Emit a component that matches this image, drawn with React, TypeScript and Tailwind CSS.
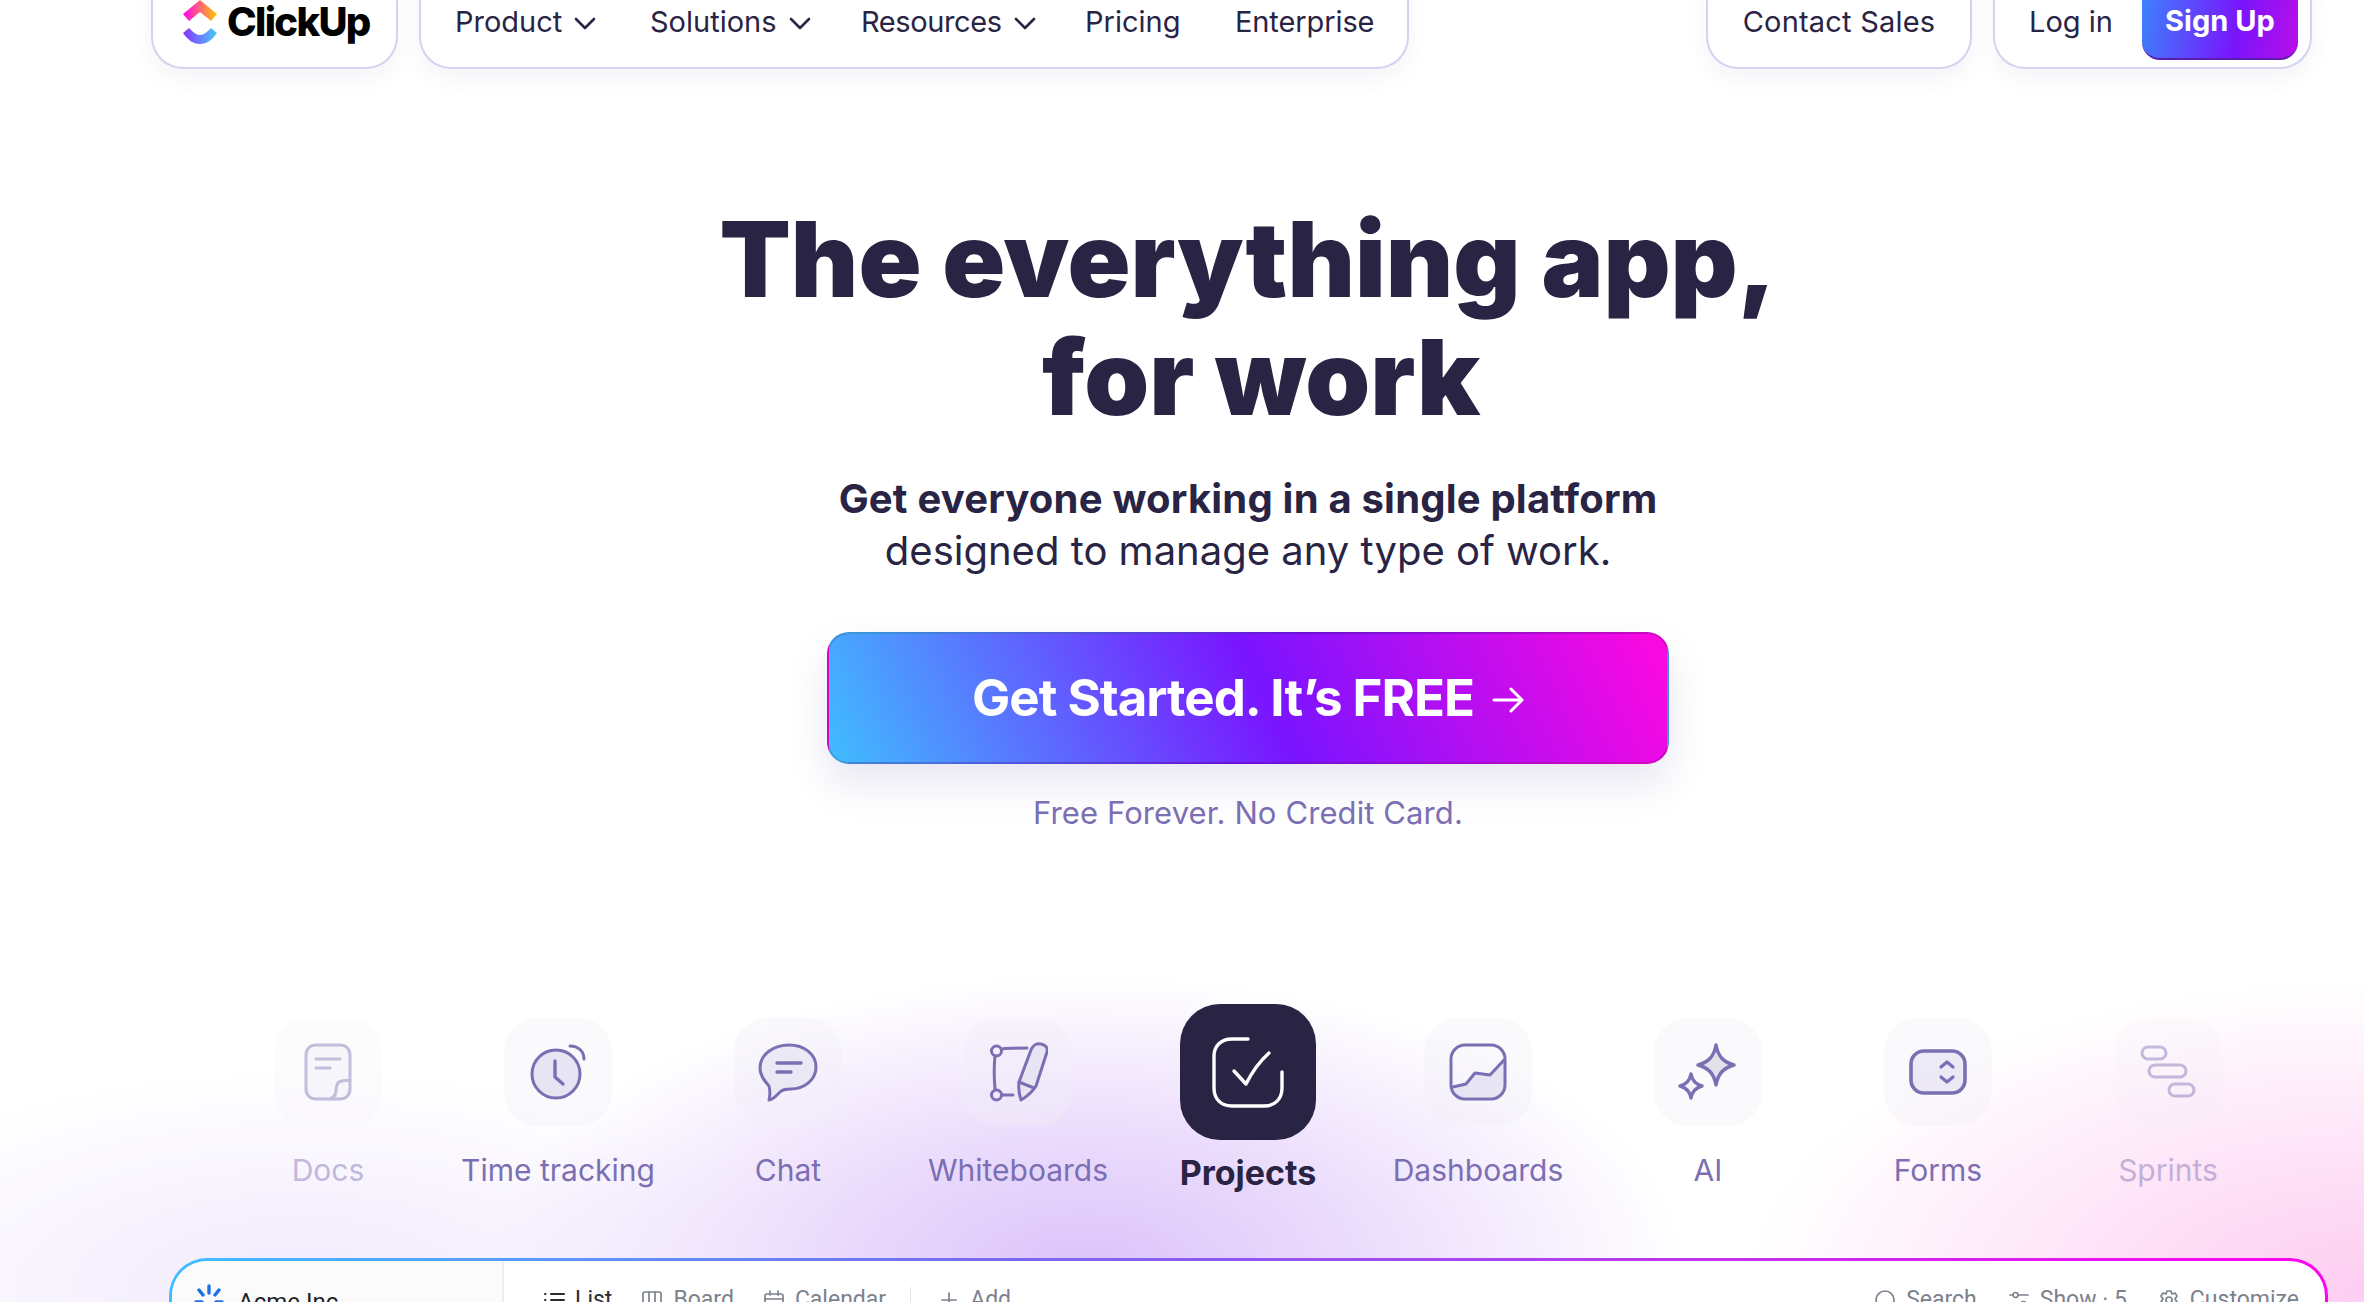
import React from "react";
import { ChevronDown } from "lucide-react";

const S = "#7b6fb3";
const F = "#e7e4f3";

function Ico({ children }: { children: React.ReactNode }) {
  return (
    <svg width="60" height="60" viewBox="0 0 60 60" fill="none" stroke={S} strokeWidth="3" strokeLinecap="round" strokeLinejoin="round">
      {children}
    </svg>
  );
}

const icons: Record<string, React.ReactNode> = {
  Docs: (
    <Ico>
      <path d="M18 3h24c6 0 10 4 10 10v34c0 6-4 10-10 10H18c-6 0-10-4-10-10V13C8 7 12 3 18 3z" fill={F} fillOpacity="0.6" />
      <path d="M52 38c-3 1-8 0-11 2-4 3-2 9-4 13-1 2-3 3-5 4" />
      <path d="M18 17h24M18 26h14" />
    </Ico>
  ),
  "Time tracking": (
    <Ico>
      <circle cx="28" cy="32" r="24" fill={F} />
      <path d="M27 19v16l8 7" strokeWidth="3.4" />
      <path d="M42 4c8 0 14 5 14 13" />
    </Ico>
  ),
  Chat: (
    <Ico>
      <path d="M31 3c15 0 27 9 27 22S46 47 33 47c-5 0-8 0-11 3-3 3-7 8-11 8 1-4 1-10 0-14-2-3-9-8-9-18C2 12 16 3 31 3z" fill={F} fillOpacity="0.7" />
      <path d="M19 21h24M19 30h14" strokeWidth="3.4" />
    </Ico>
  ),
  Whiteboards: (
    <Ico>
      <circle cx="8.5" cy="9" r="5" />
      <circle cx="8.5" cy="53" r="5" />
      <path d="M14 7c8-1 17-1 25-1M7 14c-1 10-1 22 0 33M15 53h10" />
      <path d="M43 8c2-5 6-7 10-6 5 1 7 4 6 8L48 44Q43 52 33 58Q30 50 31 40z" fill={F} />
      <path d="M31 40l15 6" />
    </Ico>
  ),
  Dashboards: (
    <Ico>
      <path d="M6 45l12-3 9-11 15 2 14-15v24c0 9-4 13-13 13H17C8 55 5 51 5 45z" fill={F} stroke="none" />
      <rect x="3" y="3" width="54" height="54" rx="14" />
      <path d="M5 45l13-3 9-11 15 2 14-15" />
    </Ico>
  ),
  AI: (
    <Ico>
      <path d="M38 3c2 11 7 17 18 20-11 3-16 9-18 20-2-11-7-17-18-20 11-3 16-9 18-20z" fill="#e2e1ea" strokeWidth="3.4" />
      <path d="M13 32c1 6 4 10 11 12-7 2-10 6-11 12-1-6-4-10-11-12 7-2 10-6 11-12z" fill="#f6f5fa" strokeWidth="3.4" />
    </Ico>
  ),
  Forms: (
    <Ico>
      <rect x="3" y="9" width="54" height="42" rx="13" fill={F} fillOpacity="0.75" strokeWidth="3.6" />
      <path d="M33 25l6-5 6 5M33 35l6 5 6-5" strokeWidth="3.2" />
    </Ico>
  ),
  Sprints: (
    <Ico>
      <rect x="4" y="5" width="24" height="12" rx="6" />
      <rect x="11" y="23" width="37" height="12" rx="6" />
      <rect x="31" y="42" width="25" height="12" rx="6" />
    </Ico>
  ),
};

const items = [
  { n: "Docs", o: "opacity-45" },
  { n: "Time tracking", o: "opacity-100" },
  { n: "Chat", o: "opacity-100" },
  { n: "Whiteboards", o: "opacity-100" },
  { n: "Projects", o: "opacity-100" },
  { n: "Dashboards", o: "opacity-100" },
  { n: "AI", o: "opacity-100" },
  { n: "Forms", o: "opacity-100" },
  { n: "Sprints", o: "opacity-45" },
];

function Tile({ n, o }: { n: string; o: string }) {
  if (n === "Projects") {
    return (
      <div className="flex w-[230px] flex-col items-center">
        <div className="flex h-[136px] w-[136px] items-center justify-center rounded-[40px] bg-[#292444]">
          <svg width="72" height="72" viewBox="0 0 72 72" fill="none" stroke="#fff" strokeWidth="3.4" strokeLinecap="round" strokeLinejoin="round">
            <path d="M36 3H20C9 3 2 10 2 20v32c0 11 7 18 18 18h32c11 0 18-7 18-18V36" />
            <path d="M22 35l12 13c5-10 13-22 23-31" />
          </svg>
        </div>
        <div className="mt-[13px] text-[34px] font-bold leading-[40px] text-[#292444]">Projects</div>
      </div>
    );
  }
  return (
    <div className={`flex w-[230px] flex-col items-center ${o}`}>
      <div className="flex h-[136px] w-[136px] items-center justify-center">
        <div className="flex h-[108px] w-[108px] items-center justify-center rounded-[34px] bg-[#f1eff7]/35">{icons[n]}</div>
      </div>
      <div className="mt-[10px] text-[30px] font-normal leading-[40px] text-[#7b6fb3]">{n}</div>
    </div>
  );
}

function NavBox({ className, children }: { className: string; children: React.ReactNode }) {
  return (
    <div className={`flex h-[93px] rounded-b-[32px] border-2 border-t-0 border-[#d4d2ee] bg-white shadow-[0_10px_20px_rgba(90,80,160,0.06)] ${className}`}>
      {children}
    </div>
  );
}

function NavItem({ label, chevron, className }: { label: string; chevron?: boolean; className: string }) {
  return (
    <div className={`flex items-center text-[29px] leading-[36px] text-[#292444] ${className}`}>
      {label}
      {chevron && (
        <svg width="22" height="14" viewBox="0 0 22 14" fill="none" stroke="#292444" strokeWidth="2.6" strokeLinecap="round" strokeLinejoin="round" className="ml-[12px] mt-[3px]">
          <path d="M2 3l9 9 9-9" />
        </svg>
      )}
    </div>
  );
}

function Tab({ icon, label, className, dark }: { icon: React.ReactNode; label: string; className: string; dark?: boolean }) {
  return (
    <div className={`flex items-center gap-[9px] text-[23px] leading-[26px] ${dark ? "text-[#2a2e34]" : "text-[#7c828d]"} ${className}`}>
      {icon}
      <span>{label}</span>
    </div>
  );
}

function Small({ children }: { children: React.ReactNode }) {
  return (
    <svg width="24" height="24" viewBox="0 0 24 24" fill="none" stroke="#7c828d" strokeWidth="1.7" strokeLinecap="round" strokeLinejoin="round">
      {children}
    </svg>
  );
}

export default function App() {
  return (
    <div className="relative h-[1302px] w-[2364px] overflow-hidden bg-white font-['Inter',sans-serif]">
      <div className="absolute inset-0 bg-[radial-gradient(ellipse_600px_290px_at_1085px_1265px,#dcc3fb_0%,#ebdcfc_45%,rgba(255,255,255,0)_100%),radial-gradient(ellipse_620px_310px_at_2364px_1290px,#fdcdf1_0%,#fee6f8_50%,rgba(255,255,255,0)_100%),radial-gradient(ellipse_520px_220px_at_300px_1290px,#f1e9fd_0%,rgba(255,255,255,0)_100%)]" />
      <div className="relative flex flex-col">
        {/* nav */}
        <div className="-mt-[24px] flex pl-[151px]">
          <NavBox className="w-[247px] items-center pl-[28px]">
            <svg width="38" height="46" viewBox="0 0 38 46">
              <defs>
                <linearGradient id="lgA" x1="0" y1="0" x2="1" y2="0">
                  <stop offset="0" stopColor="#ff02f0" />
                  <stop offset="1" stopColor="#ffc800" />
                </linearGradient>
                <linearGradient id="lgB" x1="0" y1="0" x2="1" y2="0">
                  <stop offset="0" stopColor="#8930fd" />
                  <stop offset="1" stopColor="#49ccf9" />
                </linearGradient>
              </defs>
              <path d="M19 1L36 15L30 22L19 13L8 22L2 15z" fill="url(#lgA)" />
              <path d="M2 34L8 29C12 33 15 36 19 36C23 36 26 33 30 29L36 34C31 41 26 45 19 45C12 45 7 41 2 34z" fill="url(#lgB)" />
            </svg>
            <span className="ml-[8px] text-[40px] font-extrabold leading-[46px] tracking-[-1.7px] text-black">ClickUp</span>
          </NavBox>
          <NavBox className="ml-[21px] w-[990px] items-center pl-[34px]">
            <NavItem label="Product" chevron className="w-[195px]" />
            <NavItem label="Solutions" chevron className="w-[211px]" />
            <NavItem label="Resources" chevron className="w-[224px] tracking-[-0.4px]" />
            <NavItem label="Pricing" className="w-[150px]" />
            <NavItem label="Enterprise" className="tracking-[-0.1px]" />
          </NavBox>
          <NavBox className="ml-[297px] w-[266px] items-center justify-center">
            <NavItem label="Contact Sales" className="tracking-[0.2px]" />
          </NavBox>
          <NavBox className="ml-[21px] w-[319px] items-start pl-[34px]">
            <NavItem label="Log in" className="mt-[28px]" />
            <div className="ml-[29px] flex h-[84px] w-[156px] items-center justify-center rounded-b-[18px] border-b-2 border-[#5b1bb0] bg-[linear-gradient(100deg,#3a86fb_0%,#7a14fb_62%,#b90fe8_100%)] pt-[8px] text-[29px] font-bold text-white">
              Sign Up
            </div>
          </NavBox>
        </div>

        {/* hero */}
        <div className="flex flex-col items-center pl-[132px]">
          <h1 className="mt-[131px] text-center text-[104px] font-black leading-[118px] text-[#292444]">
            The everything app,
            <br />
            <span className="pl-[26px]">for work</span>
          </h1>
          <p className="mt-[37px] text-center text-[40px] leading-[52px] text-[#292444]">
            <span className="font-bold tracking-[0.2px]">Get everyone working in a single platform</span>
            <br />
            designed to manage any type of work.
          </p>
          <div className="mt-[55px] flex h-[132px] w-[842px] items-center justify-center gap-[18px] rounded-[22px] border-2 border-black/15 bg-[linear-gradient(65deg,#40bdff_0%,#7a14ff_52%,#ff08e0_100%)] text-[51px] font-bold tracking-[-1px] text-white shadow-[0_20px_40px_rgba(90,80,160,0.14)]">
            Get Started. It’s FREE
            <svg width="32" height="32" viewBox="0 0 32 32" fill="none" stroke="#fff" strokeWidth="3" strokeLinecap="round" strokeLinejoin="round" className="mt-[4px]">
              <path d="M2 16h28M19 5l11 11-11 11" />
            </svg>
          </div>
          <div className="mt-[29px] text-[31px] leading-[40px] tracking-[0.1px] text-[#7b6fb3]">Free Forever. No Credit Card.</div>
          <div className="mt-[171px] flex">
            {items.map((it) => (
              <Tile key={it.n} n={it.n} o={it.o} />
            ))}
          </div>
        </div>

        {/* panel */}
        <div className="ml-[169px] mt-[65px] w-[2159px] rounded-[38px] bg-[linear-gradient(90deg,#40bdff_0%,#7b68ee_40%,#ff02f0_100%)] p-[3px]">
          <div className="flex h-[400px] overflow-hidden rounded-[35px] bg-white font-['Roboto',sans-serif]">
            <div className="flex w-[332px] items-start border-r-2 border-[#eeeef0] bg-[#fbfbfb] pl-[21px] pt-[26px]">
              <svg width="32" height="32" viewBox="0 0 32 32" fill="none" stroke="#1f6fe8" strokeWidth="3.4" strokeLinecap="round" className="-mt-[4px]">
                <path d="M16 3v7M6 7l4 5M26 7l-4 5M3 19h6M23 19h6" />
              </svg>
              <span className="ml-[13px] text-[24px] leading-[30px] text-[#1f2228]">Acme Inc</span>
              <ChevronDown size={16} strokeWidth={2} className="ml-[12px] mt-[10px] text-[#555]" />
            </div>
            <div className="flex flex-1 items-start pt-[26px]">
              <Tab dark className="ml-[38px]" label="List" icon={
                <svg width="24" height="24" viewBox="0 0 24 24" fill="none" stroke="#2a2e34" strokeWidth="2" strokeLinecap="round"><path d="M9 6h13M9 12h13M9 18h13M3 6h.5M3 12h.5M3 18h.5" /></svg>
              } />
              <Tab className="ml-[28px]" label="Board" icon={<Small><rect x="3" y="4" width="18" height="16" rx="2" /><path d="M9 4v16M15 4v10" /></Small>} />
              <Tab className="ml-[28px]" label="Calendar" icon={<Small><rect x="3" y="6" width="18" height="15" rx="2" /><path d="M3 11h18M8 3v4M16 3v4" /></Small>} />
              <div className="ml-[24px] h-[34px] w-px bg-[#e3e4e8]" />
              <Tab className="ml-[26px]" label="Add" icon={<Small><path d="M12 5v14M5 12h14" /></Small>} />
              <div className="ml-auto flex items-start gap-[30px] pr-[26px]">
                <Tab label="Search" className="" icon={<Small><circle cx="12" cy="12" r="9" /></Small>} />
                <Tab label="Show · 5" className="" icon={<Small><path d="M3 7h3M11 7h10M3 16h11M19 16h2" /><circle cx="8.5" cy="7" r="2.5" /><circle cx="16.5" cy="16" r="2.5" /></Small>} />
                <Tab label="Customize" className="" icon={<Small><path d="M10 3h4l1 3 3-1 2 3-2 3 2 3-2 3-3-1-1 3h-4l-1-3-3 1-2-3 2-3-2-3 2-3 3 1z" /><circle cx="12" cy="12" r="3" /></Small>} />
              </div>
            </div>
          </div>
        </div>
      </div>
    </div>
  );
}
